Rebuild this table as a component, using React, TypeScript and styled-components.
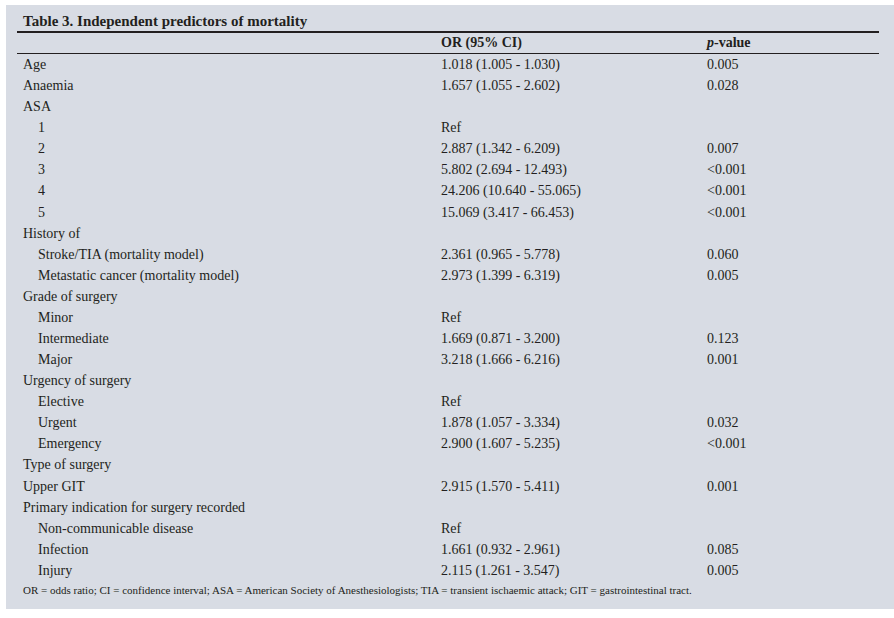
import styled, { createGlobalStyle } from "styled-components";

interface Row {
  label: string;
  or?: string;
  p?: string;
  indent?: boolean;
}

const rows: Row[] = [
  { label: "Age", or: "1.018 (1.005 - 1.030)", p: "0.005" },
  { label: "Anaemia", or: "1.657 (1.055 - 2.602)", p: "0.028" },
  { label: "ASA" },
  { label: "1", or: "Ref", indent: true },
  { label: "2", or: "2.887 (1.342 - 6.209)", p: "0.007", indent: true },
  { label: "3", or: "5.802 (2.694 - 12.493)", p: "<0.001", indent: true },
  { label: "4", or: "24.206 (10.640 - 55.065)", p: "<0.001", indent: true },
  { label: "5", or: "15.069 (3.417 - 66.453)", p: "<0.001", indent: true },
  { label: "History of" },
  { label: "Stroke/TIA (mortality model)", or: "2.361 (0.965 - 5.778)", p: "0.060", indent: true },
  { label: "Metastatic cancer (mortality model)", or: "2.973 (1.399 - 6.319)", p: "0.005", indent: true },
  { label: "Grade of surgery" },
  { label: "Minor", or: "Ref", indent: true },
  { label: "Intermediate", or: "1.669 (0.871 - 3.200)", p: "0.123", indent: true },
  { label: "Major", or: "3.218 (1.666 - 6.216)", p: "0.001", indent: true },
  { label: "Urgency of surgery" },
  { label: "Elective", or: "Ref", indent: true },
  { label: "Urgent", or: "1.878 (1.057 - 3.334)", p: "0.032", indent: true },
  { label: "Emergency", or: "2.900 (1.607 - 5.235)", p: "<0.001", indent: true },
  { label: "Type of surgery" },
  { label: "Upper GIT", or: "2.915 (1.570 - 5.411)", p: "0.001" },
  { label: "Primary indication for surgery recorded" },
  { label: "Non-communicable disease", or: "Ref", indent: true },
  { label: "Infection", or: "1.661 (0.932 - 2.961)", p: "0.085", indent: true },
  { label: "Injury", or: "2.115 (1.261 - 3.547)", p: "0.005", indent: true },
];

const GlobalStyle = createGlobalStyle`
  html, body {
    margin: 0;
    padding: 0;
    background: #ffffff;
  }
`;

const Page = styled.div`
  padding: 5px 0 8px 6px;
`;

const Panel = styled.section`
  background: #d8dce4;
  padding: 7px 15px 10px 11px;
  font-family: "Liberation Serif", "Times New Roman", serif;
  color: #231f20;
`;

const Title = styled.h3`
  margin: 0;
  padding: 0 6px;
  font-size: 15px;
  line-height: 19px;
  font-weight: bold;
  border-bottom: 2px solid #231f20;
`;

const Grid = styled.div`
  display: grid;
  grid-template-columns: 418px 266px 1fr;
`;

const RowGroup = styled.div`
  display: contents;
`;

const HeadCell = styled.div`
  padding: 0 6px;
  font-size: 14px;
  line-height: 20px;
  font-weight: bold;
  border-bottom: 1px solid #231f20;
`;

const Cell = styled.div<{ $indent?: boolean }>`
  padding: 0 6px 0 ${(p) => (p.$indent ? "21px" : "6px")};
  font-size: 14px;
  line-height: 21.08px;
  white-space: nowrap;
`;

const Footnote = styled.p`
  margin: 1px 0 0;
  padding: 0 6px;
  font-size: 11px;
  line-height: 17px;
  white-space: nowrap;
`;

export default function App() {
  return (
    <Page>
      <GlobalStyle />
      <Panel>
        <Title>Table 3. Independent predictors of mortality</Title>
        <Grid>
          <RowGroup>
            <HeadCell />
            <HeadCell>OR (95% CI)</HeadCell>
            <HeadCell>
              <i>p</i>-value
            </HeadCell>
          </RowGroup>
          {rows.map((r, i) => (
            <RowGroup key={i}>
              <Cell $indent={r.indent}>{r.label}</Cell>
              <Cell>{r.or}</Cell>
              <Cell>{r.p}</Cell>
            </RowGroup>
          ))}
        </Grid>
        <Footnote>
          OR = odds ratio; CI = confidence interval; ASA = American Society of
          Anesthesiologists; TIA = transient ischaemic attack; GIT =
          gastrointestinal tract.
        </Footnote>
      </Panel>
    </Page>
  );
}
